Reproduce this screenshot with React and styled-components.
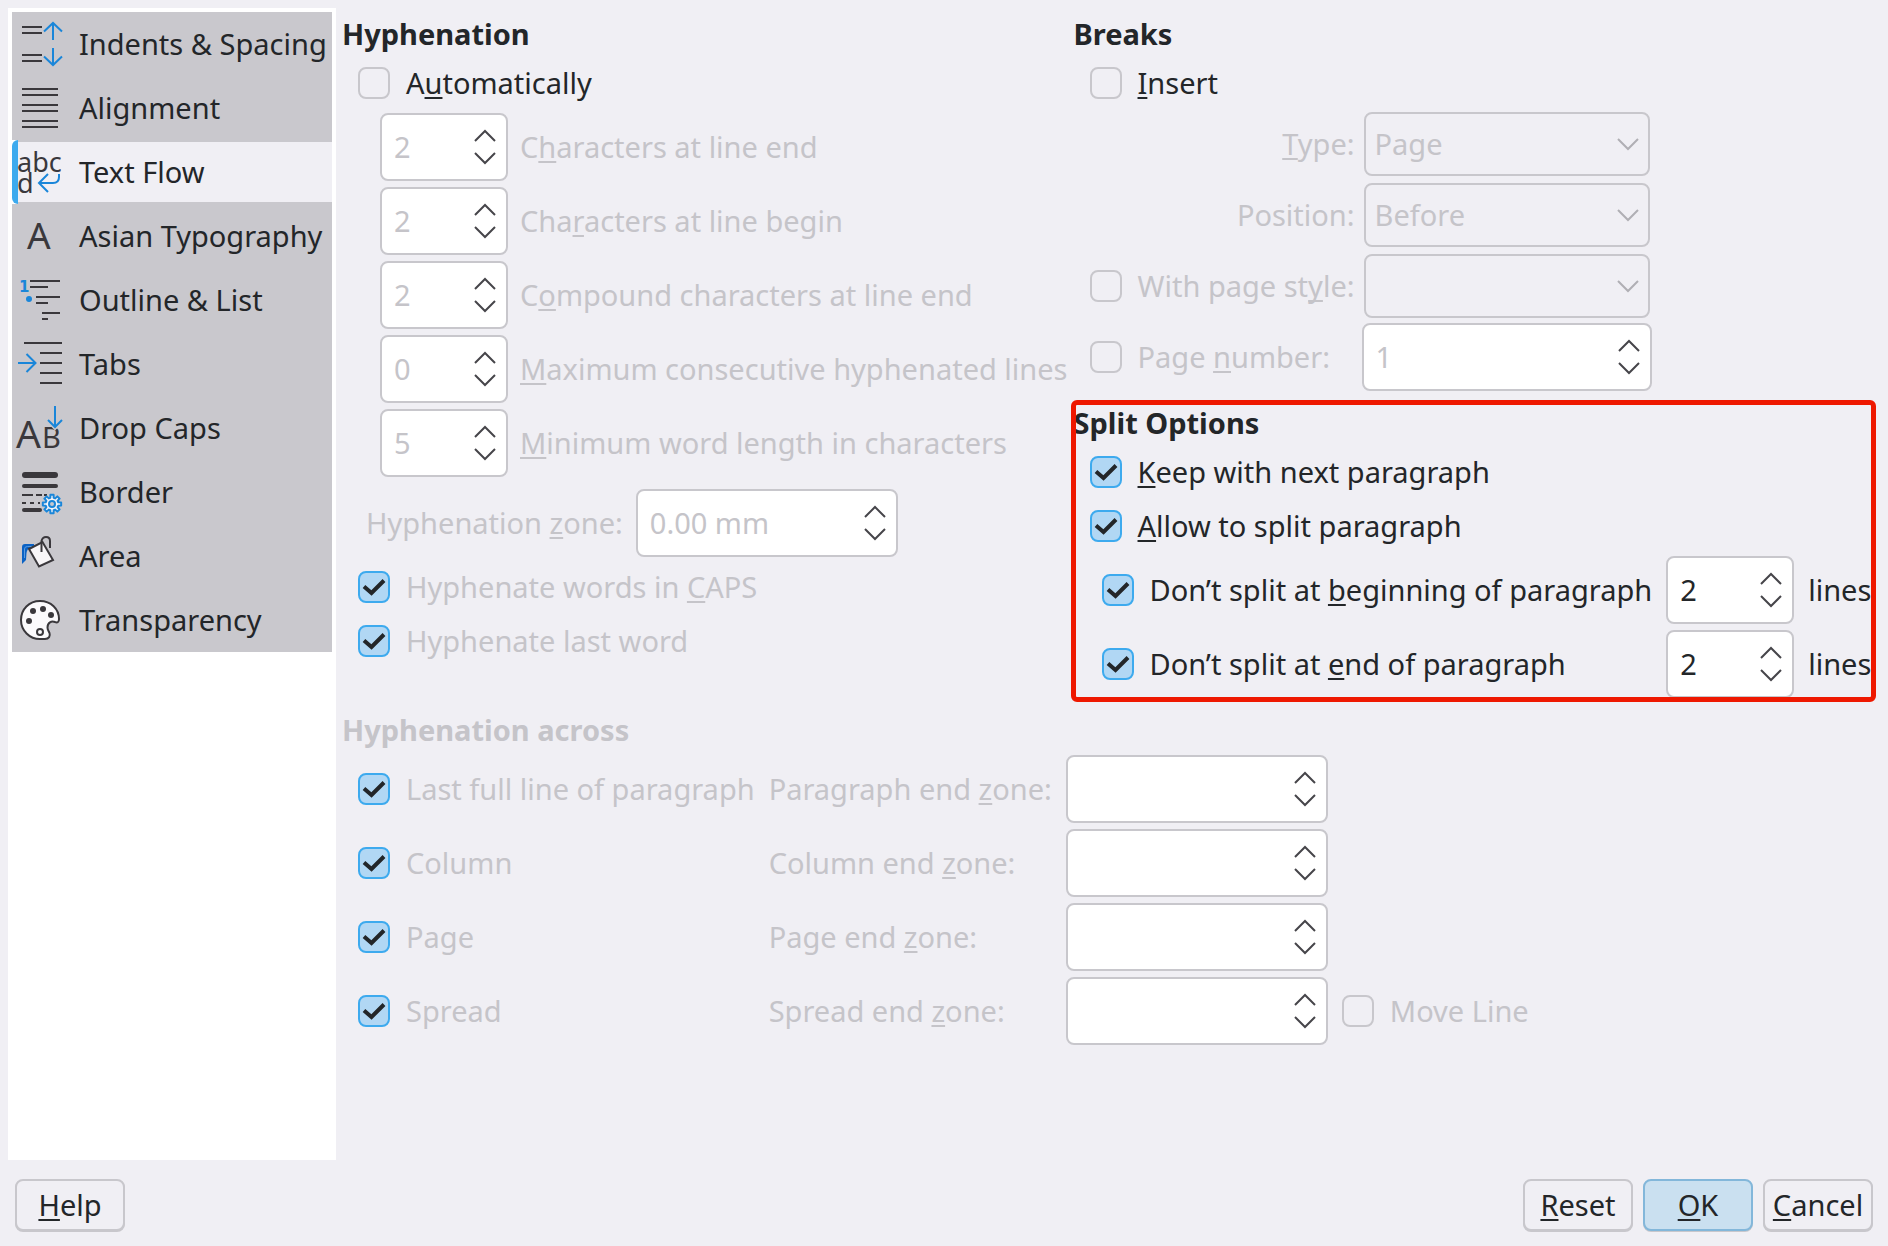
import React, { useId, useState } from "react";
import styled, { createGlobalStyle, css } from "styled-components";

const c = {
  window: "#f0eff4",
  view: "#ffffff",
  item: "#c9c8cd",
  text: "#232629",
  disabled: "#c5c4c9",
  border: "#c8c7cc",
  accent: "#3daaee",
  accentFill: "#b1d7f4",
  blue: "#1a86d9",
  ink: "#3a383c",
  mark: "#ee1800",
};

const GlobalStyle = createGlobalStyle`
  *, *::before, *::after { box-sizing: border-box; }
  body {
    margin: 0;
    background: ${c.window};
    color: ${c.text};
    font: 29px/38px "Noto Sans", "Open Sans", sans-serif;
  }
  button, input, select { font: inherit; color: inherit; margin: 0; }
`;

const Dialog = styled.form`
  display: flex;
  flex-direction: column;
  min-height: 100vh;
  padding: 8px 15px 15px 8px;
`;

const Body = styled.div`
  display: flex;
  flex: 1;
  gap: 6px;
`;

const Sidebar = styled.nav`
  display: flex;
  flex-direction: column;
  flex: none;
  width: 328px;
  padding: 4px;
  background: ${c.view};
`;

const TabButton = styled.button`
  position: relative;
  display: flex;
  align-items: center;
  gap: 15px;
  height: 64px;
  padding: 0 0 0 4px;
  border: 0 solid ${c.item};
  background: ${c.item};
  text-align: left;
  white-space: nowrap;
  ${(p) =>
    p.$active &&
    css`
      border-width: 2px 0;
      background: ${c.window};
      &::before,
      &::after {
        content: "";
        position: absolute;
        top: -2px;
        bottom: -2px;
        left: 0;
        width: 6px;
        background: ${c.view};
      }
      &::after {
        border-radius: 6px 0 0 6px;
        background: ${c.accent};
      }
    `}
`;

const IconSvg = styled.svg`
  position: relative;
  z-index: 1;
  flex: none;
  width: 48px;
  height: 48px;
  fill: none;
  stroke: ${c.ink};
  stroke-width: 2;
  overflow: visible;
  text {
    fill: ${c.ink};
    stroke: none;
    font-family: "Noto Sans", sans-serif;
  }
`;

const Content = styled.main`
  display: grid;
  flex: 1;
  grid-template-columns: max-content 1fr;
  align-content: start;
  column-gap: 6px;
  row-gap: 13px;
  padding-top: 7px;
`;

const Column = styled.div`
  display: flex;
  flex-direction: column;
  gap: 15px;
`;

const Section = styled.section`
  position: relative;
  display: flex;
  flex-direction: column;
  grid-column: ${(p) => (p.$wide ? "1 / -1" : "auto")};
  color: ${(p) => (p.$off ? c.disabled : c.text)};
`;

const Highlight = styled.div`
  position: absolute;
  inset: -4px -3px;
  border: 5px solid ${c.mark};
  border-radius: 6px;
  pointer-events: none;
`;

const Title = styled.h2`
  margin: 0;
  padding-bottom: 3px;
  font-size: 29px;
  line-height: 38px;
  font-weight: 700;
`;

const CheckRow = styled.div`
  display: flex;
  align-items: center;
  height: 54px;
  padding-left: 16px;
`;

const CheckLabel = styled.label`
  display: flex;
  align-items: center;
  gap: 16px;
  color: ${(p) => (p.$off ? c.disabled : c.text)};
  white-space: nowrap;
`;

const CheckFrame = styled.span`
  display: grid;
  flex: none;
  width: 32px;
  height: 32px;
  > * {
    grid-area: 1 / 1;
  }
  svg {
    width: 32px;
    height: 32px;
    fill: none;
    stroke: ${c.text};
    stroke-width: 4;
    pointer-events: none;
    visibility: hidden;
  }
  input:checked + svg {
    visibility: visible;
  }
`;

const CheckInput = styled.input`
  appearance: none;
  width: 32px;
  height: 32px;
  border: 2px solid ${c.border};
  border-radius: 8px;
  background: ${c.window};
  &:checked {
    border-color: ${c.accent};
    background: ${c.accentFill};
  }
`;

const Mnemonic = styled.span`
  text-decoration: underline;
  text-decoration-thickness: 2px;
  text-underline-offset: 3px;
  text-decoration-skip-ink: none;
`;

const Caption = styled.label`
  color: ${(p) => (p.$off ? c.disabled : c.text)};
  justify-self: ${(p) => (p.$end ? "end" : "start")};
  white-space: nowrap;
`;

const SpinFrame = styled.span`
  display: flex;
  align-items: center;
  flex: none;
  width: ${(p) => p.$width};
  height: 68px;
  margin: ${(p) => (p.$bleed ? "-2px" : "0")};
  padding: 0 10px 0 12px;
  border: 2px solid ${c.border};
  border-radius: 8px;
  background: ${c.view};
`;

const SpinInput = styled.input`
  flex: 1;
  min-width: 0;
  width: 0;
  padding: 0;
  border: 0;
  outline: 0;
  background: transparent;
  color: ${c.text};
  &:disabled {
    color: ${c.disabled};
  }
`;

const SpinButtons = styled.span`
  display: flex;
  flex-direction: column;
`;

const StepButton = styled.button`
  display: flex;
  align-items: center;
  width: 22px;
  height: 22px;
  padding: 0;
  border: 0;
  background: transparent;
`;

const Chevron = styled.svg`
  width: 22px;
  height: 14px;
  fill: none;
  stroke: ${(p) => (p.$off ? "#b0afb4" : "#46454a")};
  stroke-width: 2;
`;

const SpinList = styled.div`
  display: grid;
  grid-template-columns: max-content max-content;
  align-items: center;
  gap: 6px 12px;
  margin-top: 3px;
  padding-left: 38px;
`;

const ZoneRow = styled.div`
  display: flex;
  align-items: center;
  gap: 13px;
  margin: 12px 0 3px;
  padding-left: 24px;
`;

const BreakGrid = styled.div`
  display: grid;
  grid-template-columns: max-content 286px;
  grid-auto-rows: 64px;
  align-items: center;
  gap: 7px 9px;
  margin-top: 2px;
  padding-left: 16px;
`;

const SelectFrame = styled.span`
  display: grid;
  align-items: center;
  > * {
    grid-area: 1 / 1;
  }
  svg {
    justify-self: end;
    margin-right: 11px;
    pointer-events: none;
  }
`;

const Select = styled.select`
  appearance: none;
  width: 100%;
  height: 64px;
  padding: 0 40px 0 9px;
  border: 2px solid ${c.border};
  border-radius: 8px;
  background: ${c.window};
  &:disabled {
    color: ${c.disabled};
    opacity: 1;
  }
`;

const SplitGrid = styled.div`
  display: grid;
  grid-template-columns: max-content max-content max-content;
  align-items: center;
  gap: 6px 14px;
  margin-top: 3px;
  padding-left: 28px;
`;

const AcrossGrid = styled.div`
  display: grid;
  grid-template-columns: max-content max-content max-content max-content;
  align-items: center;
  gap: 6px 14px;
  margin-top: 3px;
  padding-left: 16px;
`;

const Footer = styled.footer`
  display: flex;
  gap: 10px;
  padding: 19px 0 0 7px;
`;

const Spacer = styled.span`
  flex: 1;
`;

const PushButton = styled.button`
  width: 110px;
  height: 52px;
  padding: 0;
  border: 2px solid ${(p) => (p.$primary ? "#83b7da" : c.border)};
  border-radius: 8px;
  background: ${(p) => (p.$primary ? "#cae0f0" : c.window)};
  box-shadow: 0 1px 0 ${c.border};
  text-align: center;
`;

/* Renders "&" + letter as the underlined keyboard mnemonic. */
function Label({ text }) {
  const at = text.search(/&\S/);
  if (at < 0) return <span>{text}</span>;
  return (
    <span>
      {text.slice(0, at)}
      <Mnemonic>{text[at + 1]}</Mnemonic>
      {text.slice(at + 2)}
    </span>
  );
}

function Check({ text, off, on = false }) {
  return (
    <CheckLabel $off={off}>
      <CheckFrame>
        <CheckInput type="checkbox" defaultChecked={on} disabled={off} />
        <svg viewBox="0 0 32 32" aria-hidden="true">
          <path d="M6 15.5 13.5 22 26 9.5" />
        </svg>
      </CheckFrame>
      <Label text={text} />
    </CheckLabel>
  );
}

function Spin({ id, value = "", off, width = "128px", bleed, name }) {
  const [current, setCurrent] = useState(value);
  const step = (n) => setCurrent((v) => String(Math.max(0, Number(v) + n)));
  return (
    <SpinFrame $width={width} $bleed={bleed}>
      <SpinInput
        id={id}
        type="text"
        aria-label={name}
        value={current}
        disabled={off}
        onChange={(e) => setCurrent(e.target.value)}
      />
      <SpinButtons>
        <StepButton type="button" aria-label="Increase" disabled={off} onClick={() => step(1)}>
          <Chevron viewBox="0 0 22 14">
            <path d="M1 12 11 2 21 12" />
          </Chevron>
        </StepButton>
        <StepButton type="button" aria-label="Decrease" disabled={off} onClick={() => step(-1)}>
          <Chevron viewBox="0 0 22 14">
            <path d="M1 2 11 12 21 2" />
          </Chevron>
        </StepButton>
      </SpinButtons>
    </SpinFrame>
  );
}

function Combo({ id, value, name }) {
  return (
    <SelectFrame>
      <Select id={id} aria-label={name} disabled defaultValue={value}>
        <option value={value}>{value}</option>
      </Select>
      <Chevron $off viewBox="0 0 22 14">
        <path d="M1 2 11 12 21 2" />
      </Chevron>
    </SelectFrame>
  );
}

function SpinField({ text, value }) {
  const id = useId();
  return (
    <>
      <Spin id={id} value={value} off />
      <Caption htmlFor={id} $off>
        <Label text={text} />
      </Caption>
    </>
  );
}

function AcrossRow({ text, zone, extra }) {
  const id = useId();
  return (
    <>
      <Check text={text} off on />
      <Caption htmlFor={id} $off>
        <Label text={zone} />
      </Caption>
      <Spin id={id} off width="262px" />
      {extra || <span />}
    </>
  );
}

/* Outline of an eight-toothed gear centred on (36, 36). */
const gearOutline = Array.from({ length: 8 }, (_, i) => i * 45)
  .flatMap((a) => [[a - 15, 6.5], [a - 10, 9.3], [a + 10, 9.3], [a + 15, 6.5]])
  .map(([deg, r]) => {
    const t = (deg * Math.PI) / 180;
    return `${(36 + r * Math.sin(t)).toFixed(2)},${(36 - r * Math.cos(t)).toFixed(2)}`;
  })
  .join(" ");

const icons = {
  indents: (
    <>
      <path d="M6 7h20M6 13h20M6 35h20M6 41h20" />
      <path stroke={c.blue} d="M37 20V3M28 11.5 37 3l9 8.5M37 28v17M28 36.5 37 45l9-8.5" />
    </>
  ),
  alignment: <path d="M6 5h36M6 11h36M6 21h36M6 27h36M6 37h36M6 43h36" />,
  flow: (
    <>
      <text fontSize="27">
        <tspan x="1" y="24">abc</tspan>
        <tspan x="1" y="45">d</tspan>
      </text>
      <path stroke={c.blue} d="M43 26v3q0 6-6 6H24M32 26l-9 9 9 9" />
    </>
  ),
  asian: <text x="11" y="37" fontSize="37">A</text>,
  outline: (
    <>
      <text x="3" y="16" fontSize="15" style={{ fontFamily: "DejaVu Sans", fontWeight: 700, fill: c.blue }}>1</text>
      <circle cx="13" cy="23" r="3" fill={c.blue} stroke="none" />
      <path d="M14 5h30M14 11h18M20 21h24M20 27h12M26 37h18M26 43h6" />
    </>
  ),
  tabs: (
    <>
      <path d="M8 3h38M24 13h22M24 23h22M24 33h22M24 43h22" />
      <path stroke={c.blue} d="M2 23h17M10.5 14l9 9-9 9" />
    </>
  ),
  dropcaps: (
    <>
      <text x="0" y="44" fontSize="39">A</text>
      <text x="26" y="44" fontSize="29">B</text>
      <path stroke={c.item} strokeWidth="5" d="M39 2v21M32 16l7 7 7-7" />
      <path stroke={c.blue} d="M39 2v21M32 16l7 7 7-7" />
    </>
  ),
  border: (
    <>
      <path strokeWidth="6" strokeLinecap="round" d="M9 7h30" />
      <path strokeWidth="4" strokeLinecap="round" d="M8 18h32" />
      <path d="M6 27h11M20 27h6M28 27h3M6 35h4M14 35h4M22 35h2" />
      <path strokeWidth="4" strokeLinecap="round" d="M8 42h16" />
      <polygon points={gearOutline} fill="#f4f4f8" stroke={c.blue} strokeLinejoin="round" />
      <circle cx="36" cy="36" r="3" stroke={c.blue} fill={c.item} />
    </>
  ),
  area: (
    <>
      <path fill="#0b62c4" stroke="none" d="M6 32V15q0-3 3-3h9v4h-4q-3 1-3.500 5l-.5 7z" />
      <path stroke="#5b9be0" strokeWidth="1" d="M8.500 26V17q0-2.500 3-2.500H16" />
      <path fill="#f8f6f8" d="M13 17 26.500 10 37 28 23 34.500z" />
      <path d="M25.500 20V9q1-4 4.500-4 4 0 4 4v7" />
    </>
  ),
  transparency: (
    <>
      <path
        fill="#fbfafc"
        d="M24 5C13 5 5 13.500 5 24s8.500 19 19 19h5c4 0 5.500-3 4.500-6-.7-2-2-3-2-5.500 0-5 4-7 7.500-5.500 2.500 1 4 0 4-3C43 13 35 5 24 5z"
      />
      <g fill={c.ink} stroke="none">
        <circle cx="17" cy="15" r="3" />
        <circle cx="27" cy="13" r="3" />
        <circle cx="35" cy="19" r="3" />
        <circle cx="13" cy="25" r="3" />
      </g>
      <circle cx="24" cy="36" r="3" />
    </>
  ),
};

const tabs = [
  ["indents", "Indents & Spacing"],
  ["alignment", "Alignment"],
  ["flow", "Text Flow"],
  ["asian", "Asian Typography"],
  ["outline", "Outline & List"],
  ["tabs", "Tabs"],
  ["dropcaps", "Drop Caps"],
  ["border", "Border"],
  ["area", "Area"],
  ["transparency", "Transparency"],
];

export default function App() {
  const [active, setActive] = useState("flow");
  return (
    <Dialog onSubmit={(e) => e.preventDefault()}>
      <GlobalStyle />
      <Body>
        <Sidebar>
          {tabs.map(([key, name]) => (
            <TabButton
              key={key}
              type="button"
              $active={key === active}
              aria-current={key === active ? "page" : undefined}
              onClick={() => setActive(key)}
            >
              <IconSvg viewBox="0 0 48 48" aria-hidden="true">{icons[key]}</IconSvg>
              {name}
            </TabButton>
          ))}
        </Sidebar>
        <Content>
          <Section>
            <Title>Hyphenation</Title>
            <CheckRow><Check text="A&utomatically" /></CheckRow>
            <SpinList>
              <SpinField value="2" text="C&haracters at line end" />
              <SpinField value="2" text="Cha&racters at line begin" />
              <SpinField value="2" text="C&ompound characters at line end" />
              <SpinField value="0" text="&Maximum consecutive hyphenated lines" />
              <SpinField value="5" text="&Minimum word length in characters" />
            </SpinList>
            <ZoneRow>
              <Caption htmlFor="zone" $off><Label text="Hyphenation &zone:" /></Caption>
              <Spin id="zone" value="0.00 mm" off width="262px" />
            </ZoneRow>
            <CheckRow><Check text="Hyphenate words in &CAPS" off on /></CheckRow>
            <CheckRow><Check text="Hyphenate last word" off on /></CheckRow>
          </Section>
          <Column>
            <Section>
              <Title>Breaks</Title>
              <CheckRow><Check text="&Insert" /></CheckRow>
              <BreakGrid>
                <Caption htmlFor="type" $off $end><Label text="&Type:" /></Caption>
                <Combo id="type" value="Page" />
                <Caption htmlFor="position" $off $end><Label text="Position:" /></Caption>
                <Combo id="position" value="Before" />
                <Check text="With page st&yle:" off />
                <Combo name="Page style" value="" />
                <Check text="Page &number:" off />
                <Spin name="Page number" value="1" off bleed width="290px" />
              </BreakGrid>
            </Section>
            <Section>
              <Title>Split Options</Title>
              <CheckRow><Check text="&Keep with next paragraph" on /></CheckRow>
              <CheckRow><Check text="&Allow to split paragraph" on /></CheckRow>
              <SplitGrid>
                <Check text="Don’t split at &beginning of paragraph" on />
                <Spin id="orphan" value="2" />
                <Caption htmlFor="orphan">lines</Caption>
                <Check text="Don’t split at &end of paragraph" on />
                <Spin id="widow" value="2" />
                <Caption htmlFor="widow">lines</Caption>
              </SplitGrid>
              <Highlight />
            </Section>
          </Column>
          <Section $wide $off>
            <Title>Hyphenation across</Title>
            <AcrossGrid>
              <AcrossRow text="Last full line of paragraph" zone="Paragraph end &zone:" />
              <AcrossRow text="Column" zone="Column end &zone:" />
              <AcrossRow text="Page" zone="Page end &zone:" />
              <AcrossRow text="Spread" zone="Spread end &zone:" extra={<Check text="Move Line" off />} />
            </AcrossGrid>
          </Section>
        </Content>
      </Body>
      <Footer>
        <PushButton type="button"><Label text="&Help" /></PushButton>
        <Spacer />
        <PushButton type="reset"><Label text="&Reset" /></PushButton>
        <PushButton type="submit" $primary><Label text="&OK" /></PushButton>
        <PushButton type="button"><Label text="&Cancel" /></PushButton>
      </Footer>
    </Dialog>
  );
}
